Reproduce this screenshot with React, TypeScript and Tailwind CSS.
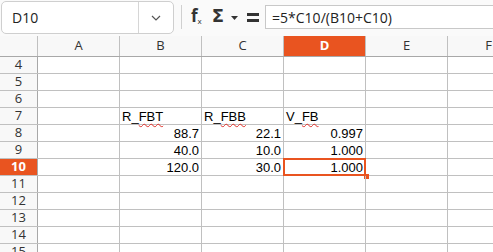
const cols = ["A", "B", "C", "D", "E", "F"];

type Cell = { text: string; align?: "left" | "right"; wavy?: [string, string] };

const data: Record<number, Record<string, Cell>> = {
  7: {
    B: { text: "R_FBT", wavy: ["R_", "FBT"] },
    C: { text: "R_FBB", wavy: ["R_", "FBB"] },
    D: { text: "V_FB", wavy: ["V_", "FB"] },
  },
  8: {
    B: { text: "88.7", align: "right" },
    C: { text: "22.1", align: "right" },
    D: { text: "0.997", align: "right" },
  },
  9: {
    B: { text: "40.0", align: "right" },
    C: { text: "10.0", align: "right" },
    D: { text: "1.000", align: "right" },
  },
  10: {
    B: { text: "120.0", align: "right" },
    C: { text: "30.0", align: "right" },
    D: { text: "1.000", align: "right" },
  },
};

const rows = [4, 5, 6, 7, 8, 9, 10, 11, 12, 13, 14, 15];

function Toolbar() {
  return (
    <div className="flex h-[36px] items-start bg-[#fafafa] font-['Open_Sans',sans-serif]">
      <div className="ml-[1px] mt-[1px] flex h-[33px] w-[173px] items-center rounded-[5px] border border-[#cfcfcf] bg-white">
        <span className="flex-1 pl-[10px] text-[14px] text-[#222]">D10</span>
        <div className="flex h-full w-[35px] items-center justify-center border-l border-[#d6d6d6]">
          <svg width="10" height="6" viewBox="0 0 10 6">
            <path d="M1 1l4 4 4-4" fill="none" stroke="#555" strokeWidth="1.2" />
          </svg>
        </div>
      </div>
      <div className="ml-[7px] mt-[5px] h-[24px] w-px bg-[#d0d0d0]" />
      <div className="ml-[9px] mt-[6px] flex items-end text-[#333]">
        <span className="text-[17px] font-bold leading-[20px]">f</span>
        <span className="mb-[1px] text-[8px] leading-[9px]">x</span>
      </div>
      <span className="ml-[10px] mt-[5px] font-['DejaVu_Sans',sans-serif] text-[18px] font-black leading-[22px] text-[#333]">
        Σ
      </span>
      <svg className="ml-[7px] mt-[16px]" width="7" height="4" viewBox="0 0 7 4">
        <path d="M0 0h7L3.5 4z" fill="#333" />
      </svg>
      <div className="ml-[9px] mt-[13px] flex flex-col gap-[3px]">
        <div className="h-[3px] w-[12px] bg-[#333]" />
        <div className="h-[3px] w-[12px] bg-[#333]" />
      </div>
      <div className="ml-[6px] mt-[5px] flex h-[24px] flex-1 items-center border-y border-l border-[#c8c8c8] bg-white pl-[6px] text-[14px] text-[#222]">
        =5*C10/(B10+C10)
      </div>
    </div>
  );
}

function Wavy({ text }: { text: string }) {
  return (
    <span className="underline decoration-[#e0302a] decoration-wavy decoration-1 underline-offset-[2px]">
      {text}
    </span>
  );
}

export default function App() {
  return (
    <div className="h-[252px] w-[493px] overflow-hidden bg-white">
      <Toolbar />
      <div className="flex h-[21px] border-b border-[#a8a8a8] bg-[#f8f8f8] font-['Open_Sans',sans-serif] text-[13px] text-[#333]">
        <div className="w-[38px] shrink-0 border-r border-[#c0c0c0]" />
        {cols.map((c) => (
          <div
            key={c}
            className={
              c === "D"
                ? "flex w-[82px] shrink-0 items-center justify-center border-r border-[#c0c0c0] bg-[#e95420] font-bold text-white"
                : "flex w-[82px] shrink-0 items-center justify-center border-r border-[#c0c0c0]"
            }
          >
            {c}
          </div>
        ))}
      </div>
      {rows.map((r) => (
        <div key={r} className="flex h-[17px] border-b border-[#c0c0c0]">
          <div
            className={
              r === 10
                ? "flex w-[38px] shrink-0 items-center justify-center border-r border-[#a8a8a8] bg-[#e95420] font-['Open_Sans',sans-serif] text-[13px] font-bold text-white"
                : "flex w-[38px] shrink-0 items-center justify-center border-r border-[#a8a8a8] bg-[#f8f8f8] font-['Open_Sans',sans-serif] text-[13px] text-[#333]"
            }
          >
            {r}
          </div>
          {cols.map((c) => {
            const cell = data[r]?.[c];
            const selected = r === 10 && c === "D";
            return (
              <div
                key={c}
                className="relative flex w-[82px] shrink-0 items-center border-r border-[#c0c0c0] font-['Liberation_Sans',sans-serif] text-[13px] leading-none text-black"
              >
                {cell && (
                  <span
                    className={
                      cell.align === "right"
                        ? "w-full pr-[2px] text-right"
                        : "w-full pl-[2px] text-left"
                    }
                  >
                    {cell.wavy ? (
                      <>
                        {cell.wavy[0]}
                        <Wavy text={cell.wavy[1]} />
                      </>
                    ) : (
                      cell.text
                    )}
                  </span>
                )}
                {selected && (
                  <>
                    <div className="absolute left-[-1px] top-[-1px] h-[18px] w-[83px] border-2 border-[#e95420]" />
                    <div className="absolute bottom-[-4px] right-[-4px] h-[5px] w-[5px] bg-[#e95420]" />
                  </>
                )}
              </div>
            );
          })}
        </div>
      ))}
    </div>
  );
}
